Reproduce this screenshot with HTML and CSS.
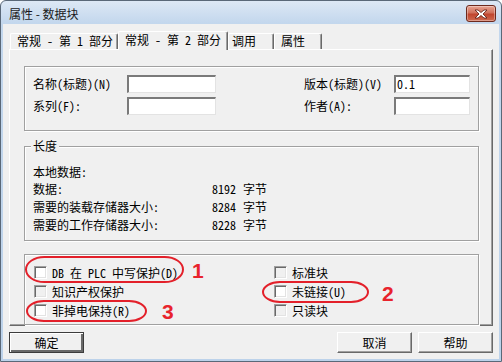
FILE: index.html
```html
<!DOCTYPE html>
<html lang="zh-CN">
<head>
<meta charset="utf-8">
<title>属性 - 数据块</title>
<link rel="stylesheet" href="styles.css">
</head>
<body>
<div class="window">
  <div class="titlebar">
    <span class="title">属性 - 数据块</span>
    <span class="close">
      <svg width="16" height="10" viewBox="0 0 16 10"><path d="M2 1 L5 1 L8 3.5 L11 1 L14 1 L10 5 L14 9 L11 9 L8 6.5 L5 9 L2 9 L6 5 Z" fill="#fff" stroke="#5a1a10" stroke-width="0.8" stroke-linejoin="round"/></svg>
    </span>
  </div>
  <div class="client">
    <div class="tabstrip">
      <div class="tab t1">常规 - 第 1 部分</div>
      <div class="tab t2 active">常规 - 第 2 部分</div>
      <div class="tab t3">调用</div>
      <div class="tab t4">属性</div>
    </div>
    <div class="panel">
      <div class="group g1">
        <span class="lbl">名称(标题)(N)</span><span class="field"></span>
        <span></span>
        <span class="lbl">版本(标题)(V)</span><span class="field f2">0.1</span>
        <span class="lbl">系列(F):</span><span class="field"></span>
        <span></span>
        <span class="lbl">作者(A):</span><span class="field f2"></span>
      </div>
      <div class="group g2">
        <span class="legend">长度</span>
        <div class="row first">本地数据:</div>
        <div class="row"><span class="k">数据:</span><span class="n">8192</span><span>字节</span></div>
        <div class="row"><span class="k">需要的装载存储器大小:</span><span class="n">8284</span><span>字节</span></div>
        <div class="row"><span class="k">需要的工作存储器大小:</span><span class="n">8228</span><span>字节</span></div>
      </div>
      <div class="group g3">
        <label class="cbrow"><span class="cb"></span>DB 在 PLC 中写保护(D)</label>
        <label class="cbrow"><span class="cb dis"></span>标准块</label>
        <label class="cbrow"><span class="cb dis"></span>知识产权保护</label>
        <label class="cbrow"><span class="cb"></span>未链接(U)</label>
        <label class="cbrow"><span class="cb"></span>非掉电保持(R)</label>
        <label class="cbrow"><span class="cb dis"></span>只读块</label>
        <span class="oval o1"></span><span class="num n1">1</span>
        <span class="oval o2"></span><span class="num n2">2</span>
        <span class="oval o3"></span><span class="num n3">3</span>
      </div>
    </div>
    <div class="buttons">
      <button class="btn def">确定</button>
      <span class="spacer"></span>
      <button class="btn">取消</button>
      <button class="btn">帮助</button>
    </div>
  </div>
</div>
</body>
</html>
```
FILE: styles.css
```css
html, body { margin: 0; padding: 0; }
body {
  width: 502px; height: 362px; overflow: hidden;
  font-family: "Noto Sans Mono CJK SC", "Noto Sans CJK SC", sans-serif;
  font-size: 12px; color: #000;
}
.window {
  box-sizing: border-box; width: 502px; height: 362px;
  border: 1px solid #5a6878; border-radius: 6px 6px 0 0;
  background: linear-gradient(#dde8f5, #c3d7ed 22px, #bcd2ea);
  padding: 0 2px 2px 2px;
  display: flex; flex-direction: column;
}
.titlebar {
  height: 23px; flex: none; display: flex; align-items: flex-start;
  justify-content: space-between; padding: 0 3px 0 6px;
}
.title { font-family: "Noto Sans CJK SC", sans-serif; font-size: 12px; color: #1a1a1a; line-height: 14px; margin-top: 6px; }
.close {
  width: 30px; height: 17px; margin-top: 4px; box-sizing: border-box;
  border: 1px solid #6d2a1e; border-radius: 3px;
  background: linear-gradient(#e8a593, #d0715c 45%, #c0452e 55%, #cf6a50);
  display: flex; align-items: center; justify-content: center;
  box-shadow: inset 0 0 0 1px rgba(255,255,255,0.35);
}
.client {
  flex: 1; background: #f0f0f0; display: flex; flex-direction: column;
  padding: 7px 0 6px 0;
}
.tabstrip { height: 18px; display: flex; align-items: flex-end; padding-left: 7px; flex: none; }
.tab {
  box-sizing: border-box; height: 16px; line-height: 14px;
  border-top: 1px solid #fff; border-left: 1px solid #fff;
  border-right: 1px solid #696969; box-shadow: inset -1px 0 #a0a0a0;
  border-radius: 2px 2px 0 0; white-space: pre; padding-left: 6px;
  background: #f0f0f0;
}
.t1 { width: 108px; }
.t2 { width: 110px; }
.t3 { width: 46px; padding-left: 3px; }
.t4 { width: 48px; padding-left: 6px; }
.tab.active {
  height: 19px; margin-bottom: -1px; position: relative; z-index: 1;
  line-height: 16px;
}
.panel {
  box-sizing: border-box; height: 277px; margin: 0 6px; flex: none;
  border-top: 1px solid #fff; border-left: 1px solid #fff;
  border-right: 1px solid #696969; border-bottom: 1px solid #696969;
  box-shadow: inset -1px -1px #a0a0a0;
  padding: 16px 13px 0 14px;
}
.group {
  border: 1px solid #a0a0a0; box-shadow: 1px 1px 0 #fff, inset 1px 1px 0 #fff;
}
.g1 {
  height: 65px; box-sizing: border-box;
  display: grid; grid-template-columns: 94px 89px 1fr 90px 76px;
  grid-template-rows: 18px 18px; row-gap: 4px; align-items: center;
  padding: 8px 8px 0 8px;
}
.lbl { white-space: nowrap; line-height: 14px; }
.field {
  box-sizing: border-box; height: 18px; background: #fff;
  border-top: 2px solid #7a7a7a; border-left: 2px solid #7a7a7a;
  border-right: 1px solid #e3e3e3; border-bottom: 1px solid #e3e3e3;
  line-height: 14px; padding-left: 1px; white-space: pre;
}
.g2 { margin-top: 15px; padding: 0 8px 6px 8px; }
.legend {
  display: inline-block; vertical-align: top; background: #f0f0f0;
  line-height: 14px; height: 14px; margin-top: -8px; padding: 0 2px; margin-left: -2px;
}
.row { height: 18px; line-height: 18px; display: flex; white-space: pre; }
.row.first { height: 16px; line-height: 16px; }
.k { width: 179px; }
.n { width: 31px; }
.g3 {
  margin-top: 13px; position: relative;
  display: grid; grid-template-columns: 240px 1fr; grid-auto-rows: 19px;
  padding: 8px 8px 4px 9px;
}
.cbrow { display: flex; align-items: center; white-space: pre; line-height: 14px; }
.cb {
  box-sizing: border-box; width: 13px; height: 13px; flex: none; margin-right: 5px;
  background: #fff;
  border-top: 1px solid #a0a0a0; border-left: 1px solid #a0a0a0;
  border-right: 1px solid #fff; border-bottom: 1px solid #fff;
  box-shadow: inset 1px 1px #696969, inset -1px -1px #e3e3e3;
}
.cb.dis { background: #f0f0f0; }
.oval {
  position: absolute; box-sizing: border-box;
  border: 2px solid #e3202a; border-radius: 20px / 14px;
}
.o1 { left: 0; top: 1px; width: 159px; height: 27px; }
.o2 { left: 237px; top: 26px; width: 107px; height: 22px; border-radius: 18px / 11px; }
.o3 { left: 1px; top: 45px; width: 121px; height: 22px; border-radius: 18px / 11px; }
.num {
  position: absolute; font-family: "Liberation Sans", Arial, sans-serif;
  font-weight: bold; font-size: 21px; line-height: 21px; color: #e8232c;
}
.n1 { left: 167px; top: 5px; }
.n2 { left: 357px; top: 28px; }
.n3 { left: 137px; top: 46px; }
.buttons { display: flex; margin: 6px 6px 0 6px; gap: 6px; height: 21px; flex: none; }
.spacer { flex: 1; }
.btn {
  box-sizing: border-box; width: 75px; height: 21px; margin: 0; padding: 0;
  font: inherit; color: #000; background: #f0f0f0;
  border-top: 1px solid #fff; border-left: 1px solid #fff;
  border-right: 1px solid #696969; border-bottom: 1px solid #696969;
  box-shadow: inset -1px -1px #a0a0a0;
}
.btn.def {
  border: 1px solid #3c3c3c;
  box-shadow: inset 1px 1px #fff, inset -2px -2px #696969, inset -1px -1px #a0a0a0;
}
```
